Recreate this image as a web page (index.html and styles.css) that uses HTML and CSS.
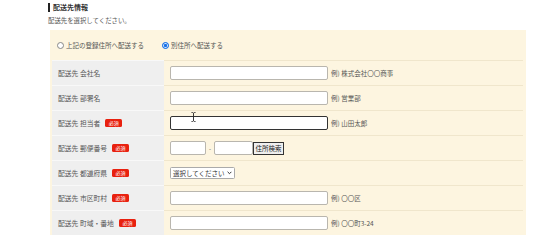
FILE: index.html
```html
<!DOCTYPE html>
<html lang="ja">
<head>
    <meta charset="UTF-8">
    <meta name="viewport" content="width=device-width, initial-scale=1.0">
    <title>配送先情報</title>
    <link rel="stylesheet" href="styles.css">
</head>
<body>

<div class="container">
    <h2 class="section-title">配送先情報</h2>
    <p class="lead">配送先を選択してください。</p>

    <div class="panel">
        <div class="choice">
            <label><span class="radio"></span>上記の登録住所へ配送する</label>
            <label><span class="radio checked"></span>別住所へ配送する</label>
        </div>

        <div class="row">
            <div class="label">配送先 会社名</div>
            <div class="field">
                <span class="input"></span>
                <span class="hint">例) 株式会社〇〇商事</span>
            </div>
        </div>
        <div class="row">
            <div class="label">配送先 部署名</div>
            <div class="field">
                <span class="input"></span>
                <span class="hint">例) 営業部</span>
            </div>
        </div>
        <div class="row">
            <div class="label">配送先 担当者<span class="req">必須</span></div>
            <div class="field">
                <span class="input focus">
                    <svg class="cursor" width="5" height="10" viewBox="0 0 5 10">
                        <path d="M0.5 0.5h1.2l0.8 0.7 0.8-0.7h1.2M2.5 1.2v7.6M0.5 9.5h1.2l0.8-0.7 0.8 0.7h1.2" fill="none" stroke="#222" stroke-width="0.9"/>
                    </svg>
                </span>
                <span class="hint">例) 山田太郎</span>
            </div>
        </div>
        <div class="row">
            <div class="label">配送先 郵便番号<span class="req">必須</span></div>
            <div class="field">
                <span class="input zip1"></span>
                <span class="dash">-</span>
                <span class="input zip2"></span>
                <span class="btn">住所検索</span>
            </div>
        </div>
        <div class="row">
            <div class="label">配送先 都道府県<span class="req">必須</span></div>
            <div class="field">
                <span class="select">選択してください<svg width="5" height="4" viewBox="0 0 5 4"><path d="M0.6 0.8l1.9 1.9 1.9-1.9" fill="none" stroke="#333" stroke-width="1"/></svg></span>
            </div>
        </div>
        <div class="row">
            <div class="label">配送先 市区町村<span class="req">必須</span></div>
            <div class="field">
                <span class="input"></span>
                <span class="hint">例) 〇〇区</span>
            </div>
        </div>
        <div class="row">
            <div class="label">配送先 町域・番地<span class="req">必須</span></div>
            <div class="field">
                <span class="input"></span>
                <span class="hint">例) 〇〇町3-24</span>
            </div>
        </div>
    </div>
</div>

</body>
</html>
```

FILE: styles.css
```css
body {
    margin: 0;
    background-color: #ffffff;
    font-family: "Noto Sans CJK JP", "Noto Sans", sans-serif;
    color: #555;
}
.container {
    padding: 2px 32px 0 48px;
}
.section-title {
    margin: 0;
    display: flex;
    align-items: center;
    height: 10px;
    font-size: 7px;
    font-weight: bold;
    color: #333;
}
.section-title::before {
    content: "";
    width: 2px;
    height: 9px;
    background-color: #222;
    margin-right: 3px;
}
.lead {
    margin: 4px 0 0;
    height: 10px;
    line-height: 10px;
    font-size: 6.4px;
    color: #555;
}
.panel {
    margin: 4px 0 0 2px;
    padding: 0 3px 0 2px;
    background-color: #fdf5e0;
}
.choice {
    display: flex;
    align-items: center;
    gap: 18px;
    height: 30px;
    padding-left: 5px;
    font-size: 6.5px;
    color: #555;
}
.choice label {
    display: flex;
    align-items: center;
    gap: 2px;
}
.radio {
    width: 5px;
    height: 5px;
    border: 1px solid #888;
    border-radius: 50%;
    background-color: white;
}
.radio.checked {
    border-color: #1a73e8;
    background-color: #1a73e8;
    box-shadow: inset 0 0 0 0.7px white;
}
.row {
    display: flex;
    height: 24px;
    border-top: 1px solid #f0e6cc;
}
.label {
    width: 106px;
    padding-left: 6px;
    display: flex;
    align-items: center;
    background-color: #efefef;
    font-size: 6.8px;
    color: #555;
    border-top: 1px solid #f8f8f8;
    margin-top: -1px;
}
.req {
    margin-left: 5px;
    padding: 0 3.5px;
    height: 8px;
    line-height: 8px;
    border-radius: 1.5px;
    background-color: #e8210f;
    color: white;
    font-size: 5px;
}
.field {
    flex: 1;
    display: flex;
    align-items: center;
    padding-left: 6px;
}
.input {
    position: relative;
    box-sizing: border-box;
    width: 158px;
    height: 14px;
    border: 1px solid #b9b6ae;
    border-radius: 2px;
    background-color: white;
}
.input.focus {
    border: 1.5px solid #333;
}
.cursor {
    position: absolute;
    left: 20px;
    top: -5px;
}
.hint {
    margin-left: 3px;
    font-size: 6.5px;
    color: #555;
}
.zip1 {
    width: 36px;
}
.zip2 {
    width: 39px;
}
.dash {
    width: 8px;
    text-align: center;
    font-size: 6px;
}
.btn {
    box-sizing: border-box;
    height: 13px;
    padding: 0 1.5px;
    display: flex;
    align-items: center;
    border: 1px solid #333;
    background-color: #efefef;
    color: #222;
    font-size: 6.5px;
}
.select {
    box-sizing: border-box;
    height: 12px;
    display: flex;
    align-items: center;
    gap: 2px;
    padding: 0 2px;
    border: 1px solid #aaa;
    border-radius: 1.5px;
    background-color: white;
    font-size: 6.5px;
    color: #333;
}
```
